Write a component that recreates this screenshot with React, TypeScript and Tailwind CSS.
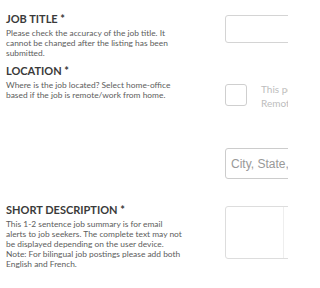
const font = { fontFamily: "Lato, 'Open Sans', sans-serif" };

function Heading({ children, className = "" }: { children: React.ReactNode; className?: string }) {
  return (
    <p className={`text-[11px] font-bold leading-[13px] text-[#3a3a3a] whitespace-nowrap ${className}`}>
      {children}
    </p>
  );
}

function Help({ lines }: { lines: string[] }) {
  return (
    <div className="mt-[3px] text-[8.4px] leading-[10px] text-[#5c5c5c]">
      {lines.map((l) => (
        <p key={l} className="whitespace-nowrap">
          {l}
        </p>
      ))}
    </div>
  );
}

export default function App() {
  return (
    <div
      className="w-[288px] h-[288px] overflow-hidden bg-white flex"
      style={font}
    >
      {/* labels */}
      <div className="w-[225px] shrink-0 pl-[6px] pt-[12px]">
        <Heading>JOB TITLE *</Heading>
        <Help
          lines={[
            "Please check the accuracy of the job title. It",
            "cannot be changed after the listing has been",
            "submitted.",
          ]}
        />
        <Heading className="mt-[6px]">LOCATION *</Heading>
        <Help
          lines={[
            "Where is the job located? Select home-office",
            "based if the job is remote/work from home.",
          ]}
        />
        <Heading className="mt-[103px]">SHORT DESCRIPTION *</Heading>
        <Help
          lines={[
            "This 1-2 sentence job summary is for email",
            "alerts to job seekers. The complete text may not",
            "be displayed depending on the user device.",
            "Note: For bilingual job postings please add both",
            "English and French.",
          ]}
        />
      </div>

      {/* fields */}
      <div className="w-[300px] shrink-0 pt-[15px]">
        <div className="w-[280px] h-[28px] rounded-[3px] border border-[#d4d4d4]" />

        <div className="mt-[41px] flex items-start gap-[14px]">
          <div className="w-[22px] h-[22px] shrink-0 rounded-[3px] border border-[#cfcfcf]" />
          <div className="-mt-[2px] text-[10px] leading-[14px] text-[#bdbdbd] whitespace-nowrap">
            <p>This position is home-office based</p>
            <p>Remote / work from home</p>
          </div>
        </div>

        <div
          className="mt-[38px] w-[280px] h-[31px] rounded-[3px] border border-[#cccccc] flex items-center pl-[5px] text-[12px] text-[#999999] whitespace-nowrap"
          style={{ fontFamily: "'Liberation Sans', Arial, sans-serif" }}
        >
          City, State, Country
        </div>

        <div className="mt-[27px] w-[280px] h-[53px] rounded-[3px] border border-[#dddddd] flex">
          <div className="w-[58px] border-r border-[#eeeeee]" />
        </div>
      </div>
    </div>
  );
}
